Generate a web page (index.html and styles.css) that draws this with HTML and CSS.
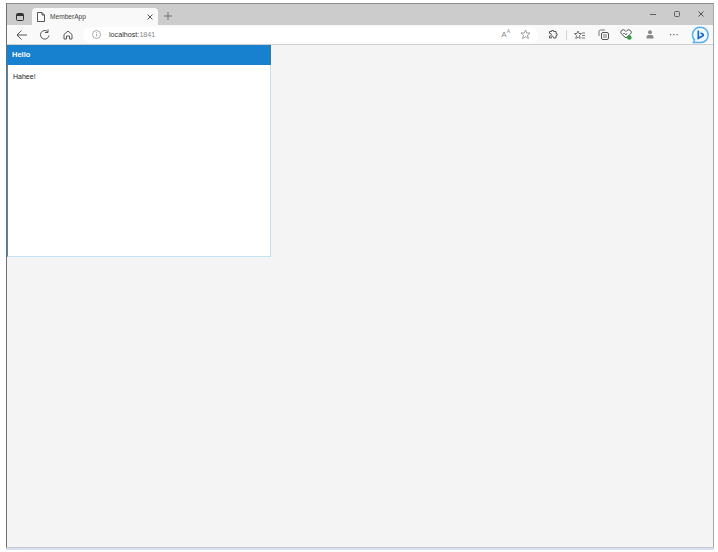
FILE: index.html
```html
<!DOCTYPE html>
<html lang="en">
<head>
<meta charset="utf-8">
<title>MemberApp</title>
<link rel="stylesheet" href="styles.css">
</head>
<body>
<div class="window">
  <div class="tabstrip">
    <svg class="tabs-icon" width="8" height="8" viewBox="0 0 8 8"><rect x=".5" y=".5" width="7" height="7" rx="1" fill="none" stroke="#333"/><rect x="1" y="1" width="6" height="2" fill="#333"/></svg>
    <div class="tab">
      <svg class="tab-page" width="8" height="10" viewBox="0 0 8 10"><path d="M.5 .5h4.500l2.500 2.500v6.500h-7z M5 .5v2.500h2.500" fill="none" stroke="#444" stroke-width=".9"/></svg>
      <span class="tab-title">MemberApp</span>
      <svg class="tab-close" width="6" height="6" viewBox="0 0 6 6"><path d="M.5 .5l5 5M5.500 .5l-5 5" stroke="#444" stroke-width=".9"/></svg>
    </div>
    <svg class="new-tab" width="8" height="8" viewBox="0 0 8 8"><path d="M4 0v8M0 4h8" stroke="#666" stroke-width=".9"/></svg>
    <div class="caption">
      <svg width="8" height="8" viewBox="0 0 8 8"><path d="M1 4.500h6" stroke="#555" stroke-width=".9"/></svg>
      <svg width="8" height="8" viewBox="0 0 8 8"><rect x="1.500" y="1.500" width="5" height="5" rx="1" fill="none" stroke="#555" stroke-width=".9"/></svg>
      <svg width="8" height="8" viewBox="0 0 8 8"><path d="M1.500 1.500l5 5M6.500 1.500l-5 5" stroke="#444" stroke-width=".9"/></svg>
    </div>
  </div>
  <div class="toolbar">
    <svg class="nav" width="12" height="12" viewBox="0 0 12 12"><path d="M11 6H1M5.500 1.500L1 6l4.500 4.500" fill="none" stroke="#444" stroke-width=".9"/></svg>
    <svg class="nav" width="12" height="12" viewBox="0 0 12 12"><path d="M10 6.500A4.300 4.300 0 1 1 8.500 2.500M9 .5v3h-3" fill="none" stroke="#444" stroke-width=".9"/></svg>
    <svg class="nav" width="12" height="12" viewBox="0 0 12 12"><path d="M2 5.500L6 2l4 3.500v4.500h-2.500v-3h-3v3H2z" fill="none" stroke="#444" stroke-width=".9"/></svg>
    <div class="address">
      <svg class="info" width="9" height="9" viewBox="0 0 9 9"><circle cx="4.500" cy="4.500" r="4" fill="none" stroke="#888" stroke-width=".7"/><path d="M4.500 4v2.500M4.500 2.200v1" stroke="#888" stroke-width=".7"/></svg>
      <span class="url"><span class="host">localhost:</span>1841</span>
      <span class="read">A<sup>A</sup></span>
      <svg width="11" height="11" viewBox="0 0 11 11"><path d="M5.500 1l1.300 3h3.200L7.500 6.200l.9 3.300-2.900-1.800-2.900 1.800.9-3.300L1 4h3.200z" fill="none" stroke="#888" stroke-width=".8"/></svg>
    </div>
    <div class="tools">
      <svg class="tool-ext" width="10" height="11" viewBox="0 0 10 11"><path d="M3.500 1.500h2v1h2.500v2h1v2h-1v2.500H5.500v-.7a1 1 0 0 0-2 0v.7H1.500V7h.6a1.300 1.300 0 0 0 0-2.600h-.6V2.500h2z" fill="none" stroke="#555" stroke-width="1"/></svg>
      <span class="sep"></span>
      <svg class="tool-fav" width="11" height="10" viewBox="0 0 11 10"><path d="M4 1l1 2.500h2.500L5.500 5.500l.6 3L4 7 1.800 8.500l.7-3L.5 3.500H3zM8 3h3M8 5.500h3M7.500 8h3.500" fill="none" stroke="#555" stroke-width=".8"/></svg>
      <svg class="tool-col" width="11" height="11" viewBox="0 0 11 11"><rect x="3.500" y="3.500" width="7" height="7" rx="1.500" fill="none" stroke="#555"/><path d="M1 7V2.500A1.500 1.500 0 0 1 2.500 1H7M5 6h4M5 8h4" fill="none" stroke="#555" stroke-width=".8"/></svg>
      <svg class="tool-heart" width="12" height="11" viewBox="0 0 12 11"><path d="M6 9L1.500 5A2.400 2.400 0 0 1 5 1.500L6 2.500 7 1.500A2.400 2.400 0 0 1 10.500 5z" fill="none" stroke="#555"/><path d="M3 4.500h2l1 1.500 1-2" fill="none" stroke="#555" stroke-width=".7"/><circle cx="9.300" cy="8.500" r="2.300" fill="#2e9b3e"/></svg>
      <svg class="tool-user" width="8" height="9" viewBox="0 0 8 9"><circle cx="4" cy="2.300" r="2" fill="#888"/><path d="M.5 8.500v-1.500A2 2 0 0 1 2.500 5h3a2 2 0 0 1 2 2v1.500z" fill="#888"/></svg>
      <svg class="tool-more" width="8" height="2" viewBox="0 0 8 2"><path d="M0 0h1.200v1.200H0zM3.200 0h1.200v1.200H3.200zM6.400 0h1.200v1.200H6.400z" fill="#666"/></svg>
      <svg class="tool-bing" width="18" height="18" viewBox="0 0 18 18"><path d="M9.500 1.200a7.700 7.700 0 0 1 0 15.400H2.500l1-2.600A7.700 7.700 0 0 1 9.500 1.200z" fill="#f2f9ff" stroke="#55aef0" stroke-width="1.500"/><path d="M7.300 4.500v7.800l4.300-2.200c.9-.6.900-1.700 0-2.200L9.500 7" fill="none" stroke="#1468c8" stroke-width="1.700"/></svg>
    </div>
  </div>
  <main class="content">
    <section class="panel">
      <h1 class="panel-title">Hello</h1>
      <div class="panel-body">Hahee!</div>
    </section>
  </main>
</div>
</body>
</html>
```
FILE: styles.css
```css
* { box-sizing: border-box; }
html, body { margin: 0; height: 100%; background: #fff; overflow: hidden; }
body { padding: 3px 4px 3px 6px; font-family: "Liberation Sans", Arial, sans-serif; }
.window {
  height: 545px;
  display: flex;
  flex-direction: column;
  border-top: 1px solid #8c8c8c;
  border-left: 1px solid #6f6f6f;
  border-right: 1px solid #a8a8a8;
  border-bottom: 1px solid #c8c8c8;
  box-shadow: 0 2px 0 #d6e2f2;
}
.tabstrip {
  height: 21px;
  flex: none;
  display: flex;
  align-items: flex-end;
  background: #cccccc;
}
.tabs-icon { margin: 0 0 4px 9px; }
.tab {
  width: 126px;
  height: 17px;
  margin-left: 8px;
  padding: 0 5px 0 5px;
  display: flex;
  align-items: center;
  background: #f9f9f9;
  border-radius: 4px 4px 0 0;
}
.tab-title { margin-left: 5px; flex: 1; font-size: 6.600px; color: #444; }
.tab-close { margin-top: 1px; }
.new-tab { margin: 0 0 5px 6px; }
.caption {
  margin: 0 0 7px auto;
  padding-right: 8px;
  display: flex;
  gap: 16px;
}
.toolbar {
  height: 20px;
  flex: none;
  display: flex;
  align-items: center;
  padding-left: 9px;
  background: #f9f9f9;
  border-bottom: 1px solid #cfcfcf;
}
.nav { margin-right: 11px; }
.nav:nth-child(3) { margin-right: 9px; }
.address {
  width: 455px;
  height: 16px;
  flex: none;
  display: flex;
  align-items: center;
  padding: 0 7px 0 9px;
  background: #fff;
  border-radius: 8px;
}
.url { margin-left: 8px; flex: 1; font-size: 7.200px; color: #888; }
.host { color: #333; }
.read { margin-right: 10px; font-size: 8px; color: #888; }
.read sup { font-size: 5px; line-height: 0; }
.tools { flex: 1; display: flex; align-items: center; padding-left: 10px; }
.sep { width: 1px; height: 10px; margin-left: 8px; background: #d4d4d4; }
.tool-fav { margin-left: 7px; }
.tool-col { margin-left: 13px; }
.tool-heart { margin-left: 11px; }
.tool-user { margin-left: 14px; }
.tool-more { margin-left: 16px; }
.tool-bing { margin-left: 13px; margin-top: 1px; flex: none; }
.content { flex: 1; background: #f4f4f4; }
.panel { width: 264px; height: 212px; display: flex; flex-direction: column; }
.panel-title {
  height: 20px;
  margin: 0;
  padding-left: 5px;
  font-size: 7.500px;
  font-weight: 700;
  line-height: 19px;
  color: #fff;
  background: #1780cf;
}
.panel-body {
  flex: 1;
  padding: 7px 5px;
  font-size: 7px;
  line-height: 9px;
  color: #222;
  background: #fff;
  border: 1px solid #c5e2f3;
  border-top: 0;
  border-left-color: #4d88b0;
}
```
